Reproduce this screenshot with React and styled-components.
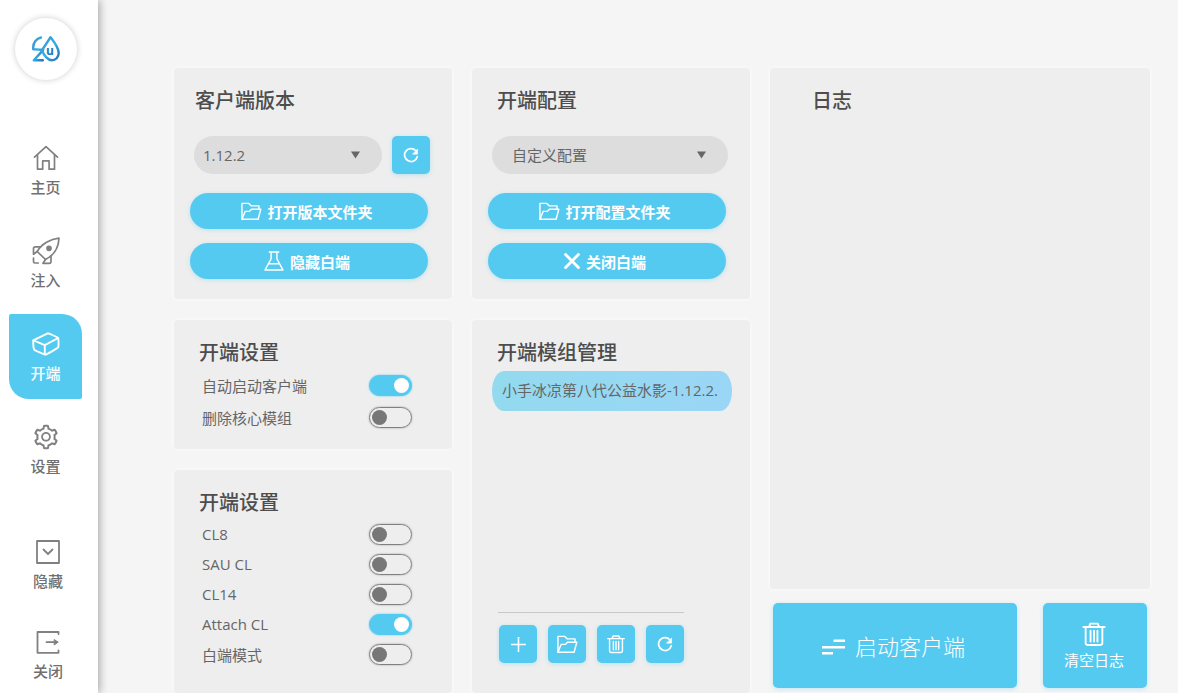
import { useState } from "react";
import styled, { createGlobalStyle } from "styled-components";
import { AiOutlinePlus, AiOutlineSetting } from "react-icons/ai";

const GlobalStyle = createGlobalStyle`
  :root {
    --blue: #55caf1;
    --card: #eeeeee;
    --page: #f5f5f5;
    --text: #666666;
    --title: #4d4d4d;
  }
  * {
    box-sizing: border-box;
  }
  body {
    margin: 0;
    background: var(--page);
    color: var(--text);
    font-family: "Open Sans", "Noto Sans CJK SC", sans-serif;
    font-size: 15px;
  }
  button,
  select {
    font: inherit;
    border: 0;
    margin: 0;
    cursor: pointer;
  }
`;

/* ICONS */

const Icon = ({ size = 28, width = 2, children }) => (
  <svg
    width={size}
    height={size}
    viewBox="0 0 28 28"
    fill="none"
    stroke="currentColor"
    strokeWidth={width}
    strokeLinecap="round"
    strokeLinejoin="round"
    aria-hidden="true"
  >
    {children}
  </svg>
);

const LogoIcon = () => (
  <svg width="32" height="30" viewBox="0 0 32 30" fill="none" aria-hidden="true">
    <defs>
      <linearGradient id="logo" x1="0" y1="0" x2="1" y2="1">
        <stop offset="0" stopColor="#4a8fc4" />
        <stop offset="0.5" stopColor="#2fb0ee" />
        <stop offset="1" stopColor="#2a6fae" />
      </linearGradient>
    </defs>
    <g
      stroke="url(#logo)"
      strokeWidth="2.4"
      strokeLinecap="round"
      strokeLinejoin="round"
    >
      <path d="M11 3.500C6.500 4.500 3.200 8.500 3.200 13.500v1.800l10 .6M13.200 15.900 3.800 26.300h9" />
      <path d="M20.500 3.200C24.500 8.500 28.700 13.500 28.700 19c0 4.200-3 7.300-7 7.300-3.700 0-8-5-9.700-10.200C15 11.500 18 7.500 20.500 3.200z" />
    </g>
    <text
      x="20"
      y="21"
      textAnchor="middle"
      fontFamily="Open Sans, sans-serif"
      fontWeight="700"
      fontSize="12"
      fill="#2277b8"
    >
      u
    </text>
  </svg>
);

const HomeIcon = () => (
  <Icon width={1.7}>
    <path d="M2.500 13.200 14 2.600l11.500 10.600" />
    <path d="M5.500 11v14.200h5.200v-8.400h6.400v8.400h5.400V11" />
  </Icon>
);

const RocketIcon = () => (
  <Icon width={1.7}>
    <path d="M27 1.200C18.500 2 9.500 7 5.200 14.500L13.500 22.500C21.500 18.500 26.500 10.500 27 1.200z" />
    <path d="M8.500 9.900H3.200c-1 0-1.700.7-1.700 1.700v5.600l3.700-2.700M19 18.800v5.800c0 1-.7 1.700-1.700 1.700h-6.300l2.500-3.800" />
    <circle cx="17" cy="11.300" r="2" fill="currentColor" />
    <path d="M1.500 21v3.600c0 .8.500 1.400 1.400 1.400h3.400" />
  </Icon>
);

const BoxIcon = () => (
  <Icon width={1.9}>
    <path d="M1.200 10.300 15.700 3.300c.8-.3 9.500 4 10.300 4.500.6.500.8 8.700.1 9.600-.8 1-11.600 7.200-12.600 7.200-1.200 0-10.500-4-11.300-5-.6-.8-1-8.300-1-9.300z" />
    <path d="m1.500 10.300 11.300 4.800L26.200 8M12.800 15.100v9.300" />
  </Icon>
);

const HideIcon = () => (
  <Icon width={1.8}>
    <path d="M3 3h22v22H3zM9.500 11.500l4.500 4.500 4.500-4.500" />
  </Icon>
);

const CloseIcon = () => (
  <Icon width={1.8}>
    <path d="M24.500 6V4H3.500v20.800h21V22.500" />
    <path d="M12.500 14.200h11" />
    <path d="m20.500 11.700 3.500 2.500-3.500 2.500z" fill="currentColor" strokeWidth="1" />
  </Icon>
);

const FolderIcon = () => (
  <Icon size={22} width={1.8}>
    <path d="M2.500 24.500V4.300h8.700l3.200 3.200h9.800v4.200" />
    <path d="M2.500 24.500 6.500 14.500h5.500l2.500-2.800h12L23 24.500z" />
  </Icon>
);

const FlaskIcon = () => (
  <Icon size={22} width={1.8}>
    <path d="M8 2.500h12M10.300 2.500v8.800L2.500 25.500h23L17.700 11.300V2.500M7 17.500h14" />
  </Icon>
);

const ReloadIcon = () => (
  <Icon size={16} width={3}>
    <path d="M25 17A11.300 11.300 0 1 1 22.500 6.500" />
    <path d="M25.500 4v8.500H17z" fill="currentColor" strokeWidth="1" />
  </Icon>
);

const CrossIcon = () => (
  <Icon size={18} width={4.5}>
    <path d="m4 4 20 20M24 4 4 24" />
  </Icon>
);

const TrashIcon = ({ size }) => (
  <Icon size={size} width={2}>
    <path d="M2.500 6.500h23M8.500 6.500 10 2.800h8l1.500 3.700M5 6.800v17c0 1.100.8 2 2 2h14c1.200 0 2-.9 2-2v-17M10.300 10.500v11.700M14 10.500v11.700M17.700 10.500v11.700" />
  </Icon>
);

const LaunchIcon = () => (
  <svg width="24" height="18" viewBox="0 0 24 18" fill="currentColor" aria-hidden="true">
    <path d="M12.500 2.500H24V5H12.500zM1 9h23v2.500H1zM1 15h11v2.500H1z" />
  </svg>
);

/* SIDEBAR */

const mainNav = [
  { text: "主页", icon: <HomeIcon /> },
  { text: "注入", icon: <RocketIcon /> },
  { text: "开端", icon: <BoxIcon /> },
  { text: "设置", icon: <AiOutlineSetting size={28} /> },
];

const Sidebar = () => {
  const [active, setActive] = useState("开端");

  return (
    <SidebarStyled>
      <Logo>
        <LogoIcon />
      </Logo>
      <NavGroup>
        {mainNav.map((item) => (
          <NavButton
            key={item.text}
            $active={item.text === active}
            onClick={() => setActive(item.text)}
          >
            {item.icon}
            <span>{item.text}</span>
          </NavButton>
        ))}
      </NavGroup>
      <WindowGroup>
        <WindowButton>
          <HideIcon />
          <span>隐藏</span>
        </WindowButton>
        <WindowButton>
          <CloseIcon />
          <span>关闭</span>
        </WindowButton>
      </WindowGroup>
    </SidebarStyled>
  );
};

/* SHARED PARTS */

const Dropdown = ({ label, options, inset }) => (
  <SelectWrap>
    <SelectBox aria-label={label} $inset={inset}>
      {options.map((option) => (
        <option key={option}>{option}</option>
      ))}
    </SelectBox>
    <Arrow viewBox="0 0 10 8" aria-hidden="true">
      <path d="M0 0h10L5 8z" />
    </Arrow>
  </SelectWrap>
);

const Setting = ({ text, on }) => {
  const [checked, setChecked] = useState(on);

  return (
    <SettingRow>
      <span>{text}</span>
      <Toggle
        type="checkbox"
        checked={checked}
        onChange={() => setChecked(!checked)}
      />
    </SettingRow>
  );
};

const App = () => {
  return (
    <AppStyled>
      <GlobalStyle />
      <Sidebar />
      <Main>
        {/* VERSION + SETTINGS */}
        <Column>
          <Card>
            <Title $inset={21}>客户端版本</Title>
            <Controls>
              <SelectRow>
                <Dropdown label="客户端版本" options={["1.12.2"]} inset={9} />
                <SquareButton aria-label="刷新版本">
                  <ReloadIcon />
                </SquareButton>
              </SelectRow>
              <PillButton>
                <FolderIcon />
                打开版本文件夹
              </PillButton>
              <PillButton>
                <FlaskIcon />
                隐藏白端
              </PillButton>
            </Controls>
          </Card>
          <Card>
            <Title $inset={25}>开端设置</Title>
            <Settings $row={32}>
              <Setting text="自动启动客户端" on={true} />
              <Setting text="删除核心模组" on={false} />
            </Settings>
          </Card>
          <Card $fill>
            <Title $inset={25}>开端设置</Title>
            <Settings $row={30}>
              <Setting text="CL8" on={false} />
              <Setting text="SAU CL" on={false} />
              <Setting text="CL14" on={false} />
              <Setting text="Attach CL" on={true} />
              <Setting text="白端模式" on={false} />
            </Settings>
          </Card>
        </Column>

        {/* CONFIG + MODS */}
        <Column>
          <Card>
            <Title $inset={25}>开端配置</Title>
            <Controls>
              <SelectRow>
                <Dropdown label="开端配置" options={["自定义配置"]} inset={20} />
              </SelectRow>
              <PillButton>
                <FolderIcon />
                打开配置文件夹
              </PillButton>
              <PillButton>
                <CrossIcon />
                关闭白端
              </PillButton>
            </Controls>
          </Card>
          <Card $fill>
            <Title $inset={25}>开端模组管理</Title>
            <ModList>
              <li>小手冰凉第八代公益水影-1.12.2.</li>
            </ModList>
            <ModTools>
              <SquareButton aria-label="添加">
                <AiOutlinePlus size={21} />
              </SquareButton>
              <SquareButton aria-label="打开文件夹">
                <FolderIcon />
              </SquareButton>
              <SquareButton aria-label="删除">
                <TrashIcon size={20} />
              </SquareButton>
              <SquareButton aria-label="刷新">
                <ReloadIcon />
              </SquareButton>
            </ModTools>
          </Card>
        </Column>

        {/* LOG */}
        <Column>
          <Card $fill>
            <Title $inset={42}>日志</Title>
          </Card>
          <Actions>
            <LaunchButton>
              <LaunchIcon />
              启动客户端
            </LaunchButton>
            <ClearButton>
              <TrashIcon size={26} />
              清空日志
            </ClearButton>
          </Actions>
        </Column>
      </Main>
    </AppStyled>
  );
};

const AppStyled = styled.div`
  display: flex;
  min-height: 100vh;
`;

const SidebarStyled = styled.aside`
  display: flex;
  flex-direction: column;
  flex: 0 0 98px;
  padding: 18px 16px 0 9px;
  background: #ffffff;
  box-shadow: 2px 0 8px rgba(0, 0, 0, 0.3);
`;

const Logo = styled.div`
  display: flex;
  align-items: center;
  justify-content: center;
  align-self: center;
  width: 62px;
  height: 62px;
  border-radius: 50%;
  background: #ffffff;
  box-shadow: 0 0 6px rgba(0, 0, 0, 0.2);
`;

const NavGroup = styled.nav`
  display: flex;
  flex-direction: column;
  gap: 8px;
  margin-top: 48px;
`;

const NavButton = styled.button`
  display: flex;
  flex-direction: column;
  align-items: center;
  gap: 4px;
  padding: 16px 0 15px;
  border-radius: 2px 20px 2px 20px;
  background: ${(props) => (props.$active ? "var(--blue)" : "transparent")};
  color: ${(props) => (props.$active ? "#ffffff" : "#808080")};
  line-height: 22px;
  span {
    color: ${(props) => (props.$active ? "#ffffff" : "#707070")};
    font-weight: 500;
  }
`;

const WindowGroup = styled.div`
  display: flex;
  flex-direction: column;
  gap: 9px;
  margin-top: auto;
  padding-left: 5px;
`;

const WindowButton = styled(NavButton)`
  padding-bottom: 11px;
`;

const Main = styled.main`
  display: grid;
  grid-template-columns: 278fr 278fr 380fr;
  gap: 20px;
  flex: 1;
  padding: 68px 28px 0 76px;
`;

const Column = styled.div`
  display: flex;
  flex-direction: column;
  gap: 21px;
  min-width: 0;
`;

const Card = styled.section`
  display: flex;
  flex-direction: column;
  flex: ${(props) => (props.$fill ? "1" : "none")};
  padding-top: 18px;
  border-radius: 4px;
  background: var(--card);
  box-shadow: 0 0 4px rgba(255, 255, 255, 0.8);
`;

const Title = styled.h2`
  margin: 0;
  padding-left: ${(props) => props.$inset}px;
  color: var(--title);
  font-size: 20px;
  font-weight: 500;
  line-height: 30px;
`;

const Controls = styled.div`
  display: flex;
  flex-direction: column;
  gap: 14px;
  padding: 20px 24px 20px 16px;
`;

const SelectRow = styled.div`
  display: flex;
  gap: 10px;
  margin: 0 -2px 5px 4px;
`;

const SelectWrap = styled.div`
  position: relative;
  flex: 1;
`;

const SelectBox = styled.select`
  appearance: none;
  display: block;
  width: 100%;
  height: 38px;
  padding: 0 40px 0 ${(props) => props.$inset}px;
  border-radius: 19px;
  background: #dddddd;
  color: var(--text);
`;

const Arrow = styled.svg`
  position: absolute;
  top: 15px;
  right: 22px;
  width: 9px;
  height: 8px;
  fill: #666666;
  pointer-events: none;
`;

const BlueButton = styled.button`
  display: flex;
  align-items: center;
  justify-content: center;
  padding: 0;
  background: var(--blue);
  color: #ffffff;
  box-shadow: 0 1px 4px rgba(85, 202, 241, 0.35);
`;

const SquareButton = styled(BlueButton)`
  flex: none;
  width: 38px;
  height: 38px;
  border-radius: 5px;
`;

const PillButton = styled(BlueButton)`
  gap: 5px;
  height: 36px;
  padding-right: 5px;
  border-radius: 18px;
  font-weight: 600;
`;

const Settings = styled.div`
  display: grid;
  grid-auto-rows: ${(props) => props.$row}px;
  padding: 1px 40px 16px 28px;
`;

const SettingRow = styled.label`
  display: flex;
  align-items: center;
  justify-content: space-between;
`;

const Toggle = styled.input`
  appearance: none;
  display: flex;
  align-items: center;
  width: 43px;
  height: 21px;
  margin: 0;
  padding: 0 2px;
  border: 1px solid ${(props) => (props.checked ? "var(--blue)" : "#808080")};
  border-radius: 11px;
  background: ${(props) => (props.checked ? "var(--blue)" : "transparent")};
  box-shadow: 0 0 2px ${(props) => (props.checked ? "var(--blue)" : "#999999")};
  cursor: pointer;
  &::before {
    content: "";
    width: 15px;
    height: 15px;
    margin-left: ${(props) => (props.checked ? "auto" : "0")};
    border-radius: 50%;
    background: ${(props) => (props.checked ? "#ffffff" : "#777777")};
  }
`;

const ModList = styled.ul`
  flex: 1;
  margin: 0;
  padding: 3px 18px 0 20px;
  list-style: none;
  li {
    height: 40px;
    padding: 0 10px;
    border-radius: 12px / 20px;
    background: linear-gradient(90deg, #93daee, #9ad6f6);
    line-height: 38px;
    white-space: nowrap;
    overflow: hidden;
  }
`;

const ModTools = styled.div`
  display: flex;
  gap: 11px;
  align-self: flex-start;
  margin: 0 0 30px 26px;
  padding: 12px 0 0 1px;
  border-top: 1px solid #c8c8c8;
`;

const Actions = styled.div`
  display: flex;
  gap: 26px;
  height: 85px;
  margin: -7px 3px 5px;
`;

const LaunchButton = styled(BlueButton)`
  flex: 1;
  gap: 10px;
  padding-right: 4px;
  border-radius: 5px;
  font-size: 22px;
  font-weight: 300;
  line-height: 30px;
`;

const ClearButton = styled(BlueButton)`
  flex: 0 0 104px;
  flex-direction: column;
  gap: 2px;
  padding-right: 2px;
  border-radius: 5px;
`;

export default App;
